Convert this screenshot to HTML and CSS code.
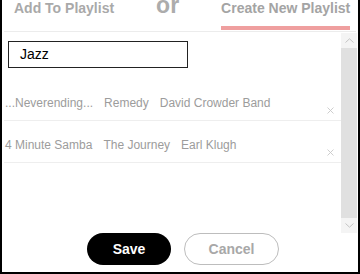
FILE: index.html
```html
<!DOCTYPE html>
<html>
<head>
<meta charset="utf-8">
<link rel="stylesheet" href="styles.css">
</head>
<body>
<div class="frame">
  <div class="tabs">
    <div class="tab tab-add">Add To Playlist</div>
    <div class="or">or</div>
    <div class="tab tab-new">Create New Playlist</div>
  </div>
  <div class="body">
    <div class="content">
      <div class="field">Jazz</div>
      <div class="list">
        <div class="row">
          <span class="cell">...Neverending...</span>
          <span class="cell">Remedy</span>
          <span class="cell">David Crowder Band</span>
          <svg class="remove" width="7" height="7" viewBox="0 0 7 7"><path d="M0.5 0.5L6.5 6.5M6.5 0.5L0.5 6.5" stroke="#c8c8c8" stroke-width="0.9" fill="none"/></svg>
        </div>
        <div class="row">
          <span class="cell">4 Minute Samba</span>
          <span class="cell">The Journey</span>
          <span class="cell">Earl Klugh</span>
          <svg class="remove" width="7" height="7" viewBox="0 0 7 7"><path d="M0.5 0.5L6.5 6.5M6.5 0.5L0.5 6.5" stroke="#c8c8c8" stroke-width="0.9" fill="none"/></svg>
        </div>
      </div>
    </div>
    <div class="scrollbar">
      <div class="sb-btn">
        <svg width="9" height="5" viewBox="0 0 9 5"><path d="M0.5 4.5L4.5 0.8L8.5 4.5" stroke="#c4c4c4" stroke-width="1" fill="none"/></svg>
      </div>
      <div class="sb-track"></div>
      <div class="sb-btn">
        <svg width="9" height="5" viewBox="0 0 9 5"><path d="M0.5 0.5L4.5 4.2L8.5 0.5" stroke="#c4c4c4" stroke-width="1" fill="none"/></svg>
      </div>
    </div>
  </div>
  <div class="actions">
    <button class="btn btn-save">Save</button>
    <button class="btn btn-cancel">Cancel</button>
  </div>
</div>
</body>
</html>
```

FILE: styles.css
```css
html, body {
  margin: 0;
  padding: 0;
  background: #fff;
}

.frame {
  width: 360px;
  height: 274px;
  box-sizing: border-box;
  border-left: 2px solid #000;
  border-right: 2px solid #000;
  border-bottom: 2px solid #000;
  display: flex;
  flex-direction: column;
  font-family: "Liberation Sans", Arial, sans-serif;
  overflow: hidden;
}

.tabs {
  height: 31px;
  margin: 0 2px;
  border-bottom: 1px solid #ececec;
  display: flex;
  align-items: flex-start;
  overflow: hidden;
  flex-shrink: 0;
}

.tab {
  font-size: 14px;
  font-weight: bold;
  line-height: 17px;
  color: #a9a9a9;
  white-space: nowrap;
}

.tab-add {
  margin-left: 10px;
}

.or {
  margin-left: 42px;
  margin-top: -9px;
  font-size: 23px;
  font-weight: bold;
  line-height: 28px;
  color: #acacac;
}

.tab-new {
  margin-left: 42px;
  padding-bottom: 9px;
  border-bottom: 4px solid #ef9f9f;
  color: #a4a4a4;
}

.body {
  height: 201px;
  display: flex;
  padding-top: 1px;
  box-sizing: border-box;
  flex-shrink: 0;
}

.content {
  flex: 1;
  padding-top: 8px;
  padding-left: 6px;
}

.field {
  width: 180px;
  height: 27px;
  box-sizing: border-box;
  border: 1px solid #222;
  padding-left: 11px;
  font-size: 14px;
  line-height: 25px;
  color: #000;
}

.list {
  margin-top: 11px;
  margin-left: -4px;
}

.row {
  height: 42px;
  box-sizing: border-box;
  border-bottom: 1px solid #eeeeee;
  display: flex;
  align-items: flex-start;
  padding-left: 1px;
  padding-right: 7px;
}

.cell {
  padding-top: 17px;
  font-size: 12px;
  line-height: 14px;
  color: #9c9c9c;
  margin-right: 11px;
  white-space: nowrap;
}

.remove {
  margin-left: auto;
  margin-top: 28px;
}

.scrollbar {
  width: 16px;
  margin-right: 1px;
  display: flex;
  flex-direction: column;
}

.sb-btn {
  height: 15px;
  background: #f4f4f4;
  display: flex;
  align-items: center;
  justify-content: center;
}

.sb-track {
  flex: 1;
  background: #e0e0e0;
}

.actions {
  flex: 1;
  display: flex;
  align-items: flex-start;
  gap: 13px;
  padding-left: 85px;
}

.btn {
  height: 32px;
  border-radius: 16px;
  font-family: "Liberation Sans", Arial, sans-serif;
  font-size: 14px;
  font-weight: bold;
  padding: 0;
  margin: 0;
  cursor: pointer;
}

.btn-save {
  width: 84px;
  background: #000;
  color: #fff;
  border: none;
}

.btn-cancel {
  width: 95px;
  background: #fff;
  color: #a8a8a8;
  border: 1px solid #bdbdbd;
}
```
